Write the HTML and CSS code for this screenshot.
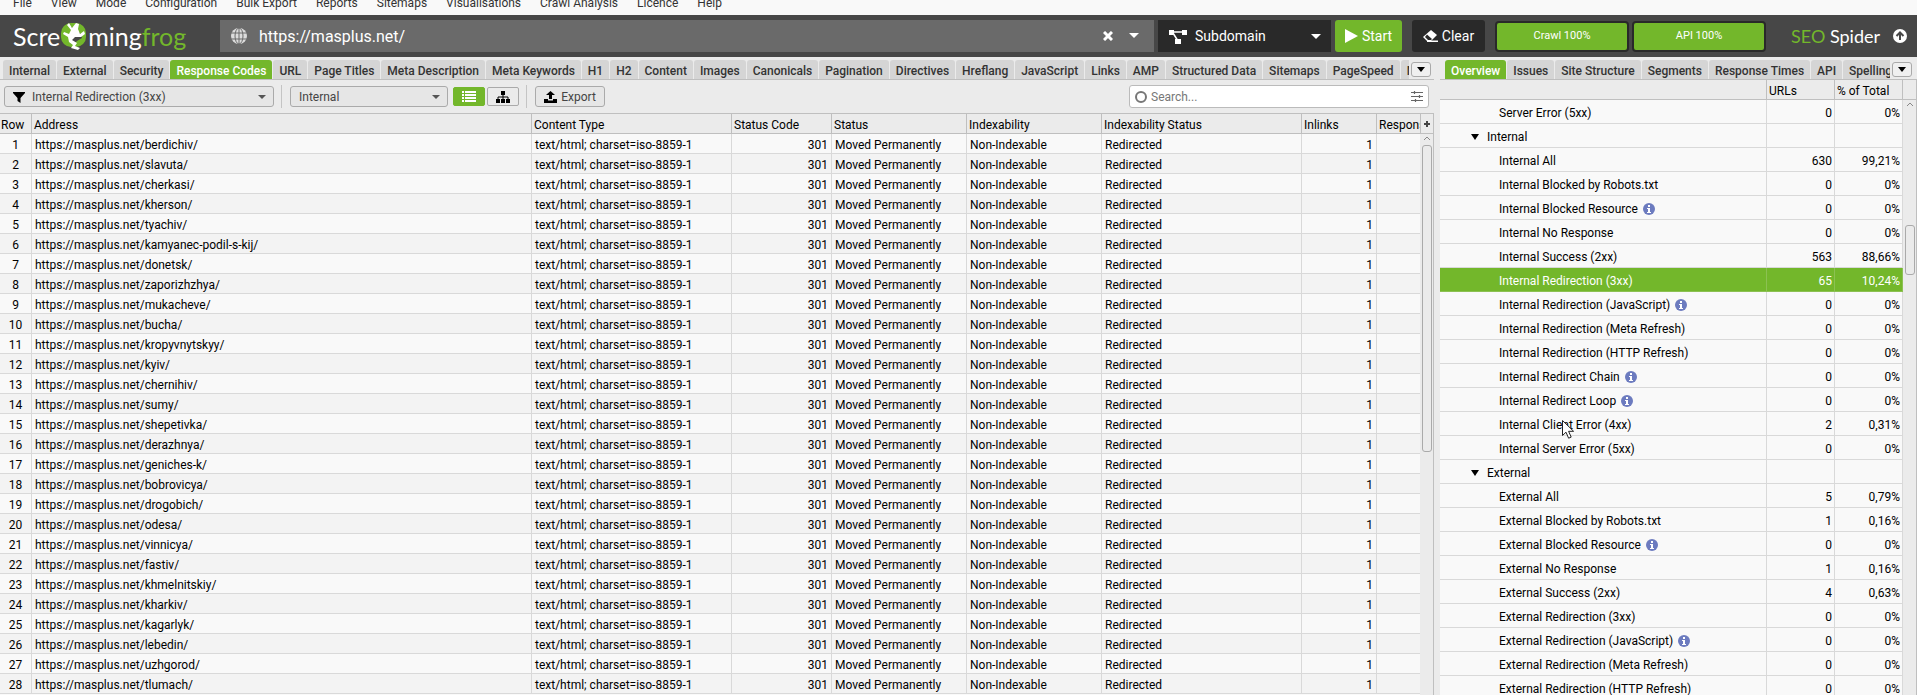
FILE: index.html
```html
<!DOCTYPE html>
<html lang="en">
<head>
<meta charset="utf-8">
<title>SEO Spider</title>
<link rel="stylesheet" href="styles.css">
</head>
<body>
<div class="app">
  <nav class="menu" aria-label="Main menu">
    <button>File</button><button>View</button><button>Mode</button><button>Configuration</button><button>Bulk Export</button><button>Reports</button><button>Sitemaps</button><button>Visualisations</button><button>Crawl Analysis</button><button>Licence</button><button>Help</button>
  </nav>

  <header class="topbar">
    <div class="logo">
      <span>Scre</span>
      <svg class="frog" width="26" height="28" viewBox="0 0 26 28"><rect x="0" y="1" width="25" height="24" rx="10" fill="#73b72b"/><path d="M10 5l5 3 5 4 1 4-5 3-3 3-4-3-1-6 2-3z" fill="#474747"/><path d="M8 1l3 5 4-5 3 1-1 5 2 5 4-3 1 3-4 3-6 0-3 3 5 3-2 3 5 2-2 2-7-2 2-3-4-3-1-5-5-3 1-2 5 2 2-4-4-5z" fill="#fff"/></svg>
      <span>ming<span class="green">frog</span></span>
    </div>
    <div class="url-box">
      <svg width="16" height="16" viewBox="0 0 16 16" fill="none" stroke="#6a6a6a"><circle cx="8" cy="8" r="8" fill="#dcdcdc" stroke="none"/><ellipse cx="8" cy="8" rx="4" ry="8"/><path d="M8 0v16M0 5h16M0 11h16"/></svg>
      <input type="text" aria-label="URL to spider" value="https://masplus.net/">
      <button class="plain" aria-label="Clear URL"><svg width="10" height="10" viewBox="0 0 10 10"><path d="M1 1l8 8M9 1l-8 8" stroke="#fff" stroke-width="3"/></svg></button>
      <button class="plain" aria-label="Recent URLs"><svg width="10" height="6" viewBox="0 0 10 6"><path d="M0 0h10L5 5z" fill="#fff"/></svg></button>
    </div>
    <div class="scope">
      <svg class="scope-icon" width="18" height="14" viewBox="0 0 18 14"><path d="M0 0h5v5H0zM13 0h5v5h-5zM6 9h6v5H6z" fill="#fff"/><path d="M4 2h10M4 3l5 8" stroke="#fff" stroke-width="1.5"/></svg>
      <select aria-label="Crawl scope"><option>Subdomain</option></select>
      <svg class="caret" width="10" height="6" viewBox="0 0 10 6"><path d="M0 0h10L5 5z" fill="#fff"/></svg>
    </div>
    <button class="start"><svg width="13" height="14" viewBox="0 0 13 14"><path d="M0 0l13 7-13 7z" fill="#fff"/></svg>Start</button>
    <button class="clear"><svg width="15" height="12" viewBox="0 0 15 12"><path d="M8 0l6 5-6 6H4L0 7z" fill="#fff"/><path d="M4 4.500l5 4.500-1 1H5L2 7z" fill="#292929"/><path d="M4 10.500h11V12H4z" fill="#fff"/></svg>Clear</button>
    <div class="progress"><div>Crawl 100%</div><div>API 100%</div></div>
    <div class="product"><span class="green">SEO</span> Spider</div>
    <button class="plain up" aria-label="Update available"><svg width="14" height="14" viewBox="0 0 14 14"><circle cx="7" cy="7" r="7" fill="#fff"/><path d="M7 11V4M3.500 7L7 3.500 10.500 7" fill="none" stroke="#474747" stroke-width="2"/></svg></button>
  </header>

  <main class="panes">
    <section class="left">
      <div class="tabbar">
        <div class="tabs">
          <button>Internal</button><button>External</button><button>Security</button><button class="active">Response Codes</button><button>URL</button><button>Page Titles</button><button>Meta Description</button><button>Meta Keywords</button><button>H1</button><button>H2</button><button>Content</button><button>Images</button><button>Canonicals</button><button>Pagination</button><button>Directives</button><button>Hreflang</button><button>JavaScript</button><button>Links</button><button>AMP</button><button>Structured Data</button><button>Sitemaps</button><button>PageSpeed</button><button>Mobile</button>
        </div>
        <button class="more" aria-label="More tabs"><svg width="8" height="5" viewBox="0 0 8 5"><path d="M0 0h8L4 5z"/></svg></button>
      </div>
      <div class="toolbar">
        <div class="combo filter">
          <svg class="funnel" width="12" height="11" viewBox="0 0 12 11"><path d="M0 0h12v1L7.500 6v5L4.500 9V6L0 1z"/></svg>
          <select aria-label="Filter"><option>Internal Redirection (3xx)</option></select>
          <svg class="caret" width="8" height="4" viewBox="0 0 8 4"><path d="M0 0h8L4 4z" fill="#555"/></svg>
        </div>
        <div class="sep"></div>
        <div class="combo kind">
          <select aria-label="Scope"><option>Internal</option></select>
          <svg class="caret" width="8" height="4" viewBox="0 0 8 4"><path d="M0 0h8L4 4z" fill="#555"/></svg>
        </div>
        <div class="views">
          <button class="on" aria-label="List view"><svg width="14" height="11" viewBox="0 0 14 11"><path d="M0 0h2v2H0zM3 0h11v2H3zM0 3h2v2H0zM3 3h11v2H3zM0 6h2v2H0zM3 6h11v2H3zM0 9h2v2H0zM3 9h11v2H3z" fill="#fff"/></svg></button>
          <button aria-label="Tree view"><svg width="14" height="12" viewBox="0 0 14 12"><path d="M5 0h4v4H5zM0 8h4v4H0zM5 8h4v4H5zM10 8h4v4h-4z"/><path d="M7 3v6M2 9V6h10v3" fill="none" stroke="#000"/></svg></button>
        </div>
        <div class="sep"></div>
        <button class="export"><svg width="13" height="12" viewBox="0 0 13 12"><path d="M6.500 0L11 4H8v4H5V4H2zM0 8h4v1.500h5V8h4v4H0z"/></svg>Export</button>
        <div class="search">
          <svg width="12" height="12" viewBox="0 0 12 12"><circle cx="6" cy="6" r="5" fill="none" stroke="#777" stroke-width="2"/></svg>
          <input type="text" aria-label="Search" placeholder="Search...">
          <button class="plain" aria-label="Search options"><svg width="12" height="11" viewBox="0 0 12 11"><path d="M0 1.500h12M0 5.500h12M0 9.500h12M3.500 0v3M8.500 4v3M4.500 8v3" stroke="#666" stroke-width="1.200"/></svg></button>
        </div>
      </div>
      <div class="grid-wrap">
        <div class="grid-scroll">
        <table class="grid">
          <colgroup><col class="c-row"><col class="c-addr"><col class="c-type"><col class="c-code"><col class="c-status"><col class="c-index"><col class="c-istatus"><col class="c-in"><col></colgroup>
          <thead><tr><th>Row</th><th>Address</th><th>Content Type</th><th>Status Code</th><th>Status</th><th>Indexability</th><th>Indexability Status</th><th>Inlinks</th><th>Response Time</th></tr></thead>
          <tbody>
            <tr><td>1</td><td>https://masplus.net/berdichiv/</td><td>text/html; charset=iso-8859-1</td><td>301</td><td>Moved Permanently</td><td>Non-Indexable</td><td>Redirected</td><td>1</td><td></td></tr>
            <tr><td>2</td><td>https://masplus.net/slavuta/</td><td>text/html; charset=iso-8859-1</td><td>301</td><td>Moved Permanently</td><td>Non-Indexable</td><td>Redirected</td><td>1</td><td></td></tr>
            <tr><td>3</td><td>https://masplus.net/cherkasi/</td><td>text/html; charset=iso-8859-1</td><td>301</td><td>Moved Permanently</td><td>Non-Indexable</td><td>Redirected</td><td>1</td><td></td></tr>
            <tr><td>4</td><td>https://masplus.net/kherson/</td><td>text/html; charset=iso-8859-1</td><td>301</td><td>Moved Permanently</td><td>Non-Indexable</td><td>Redirected</td><td>1</td><td></td></tr>
            <tr><td>5</td><td>https://masplus.net/tyachiv/</td><td>text/html; charset=iso-8859-1</td><td>301</td><td>Moved Permanently</td><td>Non-Indexable</td><td>Redirected</td><td>1</td><td></td></tr>
            <tr><td>6</td><td>https://masplus.net/kamyanec-podil-s-kij/</td><td>text/html; charset=iso-8859-1</td><td>301</td><td>Moved Permanently</td><td>Non-Indexable</td><td>Redirected</td><td>1</td><td></td></tr>
            <tr><td>7</td><td>https://masplus.net/donetsk/</td><td>text/html; charset=iso-8859-1</td><td>301</td><td>Moved Permanently</td><td>Non-Indexable</td><td>Redirected</td><td>1</td><td></td></tr>
            <tr><td>8</td><td>https://masplus.net/zaporizhzhya/</td><td>text/html; charset=iso-8859-1</td><td>301</td><td>Moved Permanently</td><td>Non-Indexable</td><td>Redirected</td><td>1</td><td></td></tr>
            <tr><td>9</td><td>https://masplus.net/mukacheve/</td><td>text/html; charset=iso-8859-1</td><td>301</td><td>Moved Permanently</td><td>Non-Indexable</td><td>Redirected</td><td>1</td><td></td></tr>
            <tr><td>10</td><td>https://masplus.net/bucha/</td><td>text/html; charset=iso-8859-1</td><td>301</td><td>Moved Permanently</td><td>Non-Indexable</td><td>Redirected</td><td>1</td><td></td></tr>
            <tr><td>11</td><td>https://masplus.net/kropyvnytskyy/</td><td>text/html; charset=iso-8859-1</td><td>301</td><td>Moved Permanently</td><td>Non-Indexable</td><td>Redirected</td><td>1</td><td></td></tr>
            <tr><td>12</td><td>https://masplus.net/kyiv/</td><td>text/html; charset=iso-8859-1</td><td>301</td><td>Moved Permanently</td><td>Non-Indexable</td><td>Redirected</td><td>1</td><td></td></tr>
            <tr><td>13</td><td>https://masplus.net/chernihiv/</td><td>text/html; charset=iso-8859-1</td><td>301</td><td>Moved Permanently</td><td>Non-Indexable</td><td>Redirected</td><td>1</td><td></td></tr>
            <tr><td>14</td><td>https://masplus.net/sumy/</td><td>text/html; charset=iso-8859-1</td><td>301</td><td>Moved Permanently</td><td>Non-Indexable</td><td>Redirected</td><td>1</td><td></td></tr>
            <tr><td>15</td><td>https://masplus.net/shepetivka/</td><td>text/html; charset=iso-8859-1</td><td>301</td><td>Moved Permanently</td><td>Non-Indexable</td><td>Redirected</td><td>1</td><td></td></tr>
            <tr><td>16</td><td>https://masplus.net/derazhnya/</td><td>text/html; charset=iso-8859-1</td><td>301</td><td>Moved Permanently</td><td>Non-Indexable</td><td>Redirected</td><td>1</td><td></td></tr>
            <tr><td>17</td><td>https://masplus.net/geniches-k/</td><td>text/html; charset=iso-8859-1</td><td>301</td><td>Moved Permanently</td><td>Non-Indexable</td><td>Redirected</td><td>1</td><td></td></tr>
            <tr><td>18</td><td>https://masplus.net/bobrovicya/</td><td>text/html; charset=iso-8859-1</td><td>301</td><td>Moved Permanently</td><td>Non-Indexable</td><td>Redirected</td><td>1</td><td></td></tr>
            <tr><td>19</td><td>https://masplus.net/drogobich/</td><td>text/html; charset=iso-8859-1</td><td>301</td><td>Moved Permanently</td><td>Non-Indexable</td><td>Redirected</td><td>1</td><td></td></tr>
            <tr><td>20</td><td>https://masplus.net/odesa/</td><td>text/html; charset=iso-8859-1</td><td>301</td><td>Moved Permanently</td><td>Non-Indexable</td><td>Redirected</td><td>1</td><td></td></tr>
            <tr><td>21</td><td>https://masplus.net/vinnicya/</td><td>text/html; charset=iso-8859-1</td><td>301</td><td>Moved Permanently</td><td>Non-Indexable</td><td>Redirected</td><td>1</td><td></td></tr>
            <tr><td>22</td><td>https://masplus.net/fastiv/</td><td>text/html; charset=iso-8859-1</td><td>301</td><td>Moved Permanently</td><td>Non-Indexable</td><td>Redirected</td><td>1</td><td></td></tr>
            <tr><td>23</td><td>https://masplus.net/khmelnitskiy/</td><td>text/html; charset=iso-8859-1</td><td>301</td><td>Moved Permanently</td><td>Non-Indexable</td><td>Redirected</td><td>1</td><td></td></tr>
            <tr><td>24</td><td>https://masplus.net/kharkiv/</td><td>text/html; charset=iso-8859-1</td><td>301</td><td>Moved Permanently</td><td>Non-Indexable</td><td>Redirected</td><td>1</td><td></td></tr>
            <tr><td>25</td><td>https://masplus.net/kagarlyk/</td><td>text/html; charset=iso-8859-1</td><td>301</td><td>Moved Permanently</td><td>Non-Indexable</td><td>Redirected</td><td>1</td><td></td></tr>
            <tr><td>26</td><td>https://masplus.net/lebedin/</td><td>text/html; charset=iso-8859-1</td><td>301</td><td>Moved Permanently</td><td>Non-Indexable</td><td>Redirected</td><td>1</td><td></td></tr>
            <tr><td>27</td><td>https://masplus.net/uzhgorod/</td><td>text/html; charset=iso-8859-1</td><td>301</td><td>Moved Permanently</td><td>Non-Indexable</td><td>Redirected</td><td>1</td><td></td></tr>
            <tr><td>28</td><td>https://masplus.net/tlumach/</td><td>text/html; charset=iso-8859-1</td><td>301</td><td>Moved Permanently</td><td>Non-Indexable</td><td>Redirected</td><td>1</td><td></td></tr>
          </tbody>
        </table>
        </div>
        <div class="side">
          <button class="add" aria-label="Add column"><svg width="6" height="6" viewBox="0 0 6 6"><path d="M3 0v6M0 3h6" stroke="#444" stroke-width="2"/></svg></button>
          <div class="scrollbar main-bar"><svg width="8" height="5" viewBox="0 0 8 5"><path d="M1 4l3-3 3 3" fill="none" stroke="#888"/></svg><i class="thumb"></i></div>
        </div>
      </div>
    </section>

    <aside class="right">
      <div class="tabbar">
        <div class="tabs">
          <button class="active">Overview</button><button>Issues</button><button>Site Structure</button><button>Segments</button><button>Response Times</button><button>API</button><button>Spelling &amp; Grammar</button>
        </div>
        <button class="more" aria-label="More tabs"><svg width="8" height="5" viewBox="0 0 8 5"><path d="M0 0h8L4 5z"/></svg></button>
      </div>
      <div class="grid-wrap">
        <div class="grid-scroll">
        <table class="tree">
          <colgroup><col><col class="c-num"><col class="c-num"></colgroup>
          <thead><tr><th></th><th>URLs</th><th>% of Total</th></tr></thead>
          <tbody>
            <tr><td>Server Error (5xx)</td><td>0</td><td>0%</td></tr>
            <tr class="group"><td><svg width="8" height="6" viewBox="0 0 8 6"><path d="M0 0h8L4 6z"/></svg>Internal</td><td></td><td></td></tr>
            <tr><td>Internal All</td><td>630</td><td>99,21%</td></tr>
            <tr><td>Internal Blocked by Robots.txt</td><td>0</td><td>0%</td></tr>
            <tr><td>Internal Blocked Resource<svg class="info" width="12" height="12" viewBox="0 0 12 12"><circle cx="6" cy="6" r="6"/><path d="M5 2h2v2H5zM4 5h3v4h1v1H4V9h1V6H4z"/></svg></td><td>0</td><td>0%</td></tr>
            <tr><td>Internal No Response</td><td>0</td><td>0%</td></tr>
            <tr><td>Internal Success (2xx)</td><td>563</td><td>88,66%</td></tr>
            <tr class="selected"><td>Internal Redirection (3xx)</td><td>65</td><td>10,24%</td></tr>
            <tr><td>Internal Redirection (JavaScript)<svg class="info" width="12" height="12" viewBox="0 0 12 12"><circle cx="6" cy="6" r="6"/><path d="M5 2h2v2H5zM4 5h3v4h1v1H4V9h1V6H4z"/></svg></td><td>0</td><td>0%</td></tr>
            <tr><td>Internal Redirection (Meta Refresh)</td><td>0</td><td>0%</td></tr>
            <tr><td>Internal Redirection (HTTP Refresh)</td><td>0</td><td>0%</td></tr>
            <tr><td>Internal Redirect Chain<svg class="info" width="12" height="12" viewBox="0 0 12 12"><circle cx="6" cy="6" r="6"/><path d="M5 2h2v2H5zM4 5h3v4h1v1H4V9h1V6H4z"/></svg></td><td>0</td><td>0%</td></tr>
            <tr><td>Internal Redirect Loop<svg class="info" width="12" height="12" viewBox="0 0 12 12"><circle cx="6" cy="6" r="6"/><path d="M5 2h2v2H5zM4 5h3v4h1v1H4V9h1V6H4z"/></svg></td><td>0</td><td>0%</td></tr>
            <tr><td>Internal Client Error (4xx)</td><td>2</td><td>0,31%</td></tr>
            <tr><td>Internal Server Error (5xx)</td><td>0</td><td>0%</td></tr>
            <tr class="group"><td><svg width="8" height="6" viewBox="0 0 8 6"><path d="M0 0h8L4 6z"/></svg>External</td><td></td><td></td></tr>
            <tr><td>External All</td><td>5</td><td>0,79%</td></tr>
            <tr><td>External Blocked by Robots.txt</td><td>1</td><td>0,16%</td></tr>
            <tr><td>External Blocked Resource<svg class="info" width="12" height="12" viewBox="0 0 12 12"><circle cx="6" cy="6" r="6"/><path d="M5 2h2v2H5zM4 5h3v4h1v1H4V9h1V6H4z"/></svg></td><td>0</td><td>0%</td></tr>
            <tr><td>External No Response</td><td>1</td><td>0,16%</td></tr>
            <tr><td>External Success (2xx)</td><td>4</td><td>0,63%</td></tr>
            <tr><td>External Redirection (3xx)</td><td>0</td><td>0%</td></tr>
            <tr><td>External Redirection (JavaScript)<svg class="info" width="12" height="12" viewBox="0 0 12 12"><circle cx="6" cy="6" r="6"/><path d="M5 2h2v2H5zM4 5h3v4h1v1H4V9h1V6H4z"/></svg></td><td>0</td><td>0%</td></tr>
            <tr><td>External Redirection (Meta Refresh)</td><td>0</td><td>0%</td></tr>
            <tr><td>External Redirection (HTTP Refresh)</td><td>0</td><td>0%</td></tr>
          </tbody>
        </table>
        </div>
        <div class="side">
          <div class="corner"></div>
          <div class="scrollbar tree-bar"><svg width="8" height="5" viewBox="0 0 8 5"><path d="M1 4l3-3 3 3" fill="none" stroke="#888"/></svg><i class="thumb"></i></div>
        </div>
      </div>
      <svg class="cursor" width="13" height="20" viewBox="0 0 13 20"><path d="M.5 .5v15l3.500-3.300 2.600 6 2.600-1.100-2.600-5.800h5z" fill="#fff" stroke="#222"/></svg>
    </aside>
  </main>
</div>
</body>
</html>
```
FILE: styles.css
```css
* { box-sizing: border-box; }

body {
  margin: 0;
  font: 12px/16px Roboto, "Liberation Sans", sans-serif;
  color: #000;
  background: #ebebeb;
}

button, input, select {
  font: inherit;
  color: inherit;
  margin: 0;
  padding: 0;
  border: 0;
  background: none;
  appearance: none;
  outline: none;
  white-space: nowrap;
}

svg { display: block; flex: none; }
.green { color: #73b72b; }
.plain { display: flex; }

.app {
  height: 100vh;
  display: flex;
  flex-direction: column;
  overflow: hidden;
}

/* Menu */
.menu {
  display: flex;
  align-items: flex-end;
  gap: 19px;
  height: 15px;
  padding: 0 13px 4px;
  background: #f9f9f9;
  color: #333;
  overflow: hidden;
}

/* Top bar */
.topbar {
  display: flex;
  align-items: center;
  height: 42px;
  padding: 5px 10px 5px 13px;
  background: #474747;
  color: #fff;
  font-size: 14px;
}
.topbar > * { height: 32px; flex: none; }
.logo {
  display: flex;
  align-items: center;
  width: 207px;
  font: 25px/32px Lato, sans-serif;
}
.frog { margin: 0 1px; }
.topbar .url-box {
  flex: 1;
  min-width: 0;
  display: flex;
  align-items: center;
  gap: 16px;
  padding: 0 15px 0 11px;
  margin-right: 4px;
  background: #6a6a6a;
}
.url-box input { flex: 1; min-width: 0; margin-left: -4px; font-size: 16px; }
.scope {
  position: relative;
  width: 173px;
  margin-right: 4px;
  background: #292929;
}
.scope select { width: 100%; height: 100%; padding-left: 37px; }
.scope-icon { position: absolute; left: 11px; top: 10px; pointer-events: none; }
.caret { position: absolute; right: 10px; top: 14px; pointer-events: none; }
.start, .clear {
  display: flex;
  align-items: center;
  justify-content: center;
  gap: 4px;
  border-radius: 3px;
}
.start { width: 67px; background: #73b72b; margin-right: 10px; }
.clear { width: 73px; background: #292929; margin-right: 10px; }
.progress {
  display: flex;
  align-items: center;
  gap: 3px;
  font-size: 11px;
}
.progress div {
  display: flex;
  align-items: center;
  justify-content: center;
  width: 134px;
  height: 31px;
  border: 2px solid #292929;
  border-radius: 4px;
  background: #73b72b;
}
.product { margin-left: 25px; width: 102px; font: 18px/32px Lato, sans-serif; }
.up { align-items: center; }

/* Panes */
.panes { flex: 1; min-height: 0; display: flex; gap: 6px; }
.left { flex: 1; min-width: 0; display: flex; flex-direction: column; }
.right { position: relative; flex: none; width: 477px; display: flex; flex-direction: column; }

.tabbar {
  flex: none;
  display: flex;
  align-items: flex-end;
  gap: 2px;
  height: 23px;
  padding: 0 3px;
  border-bottom: 1px solid #bfbfbf;
  background: #ebebeb;
}
.right .tabbar { padding-left: 5px; padding-right: 5px; }
.tabs { flex: 1; min-width: 0; display: flex; gap: 1px; overflow: hidden; }
.tabs button {
  flex: none;
  height: 19px;
  padding: 2px 6px 0;
  border-radius: 3px 3px 0 0;
  background: #d5d5d5;
  color: #333;
  font-weight: 500;
  line-height: 16px;
}
.tabs .active { background: #73b72b; color: #fff; }
.more {
  display: flex;
  align-items: center;
  justify-content: center;
  width: 20px;
  height: 15px;
  margin-bottom: 2px;
  border: 1px solid #aaa;
  border-radius: 3px;
  background: #f0f0f0;
}

/* Toolbar */
.toolbar {
  flex: none;
  display: flex;
  align-items: center;
  height: 33px;
  padding: 0 5px 0 4px;
  color: #444;
}
.combo { position: relative; height: 21px; }
.combo select {
  width: 100%;
  height: 100%;
  padding-left: 8px;
  border: 1px solid #aaa;
  border-radius: 3px;
  background: #e6e6e6;
}
.combo .caret { right: 8px; top: 9px; }
.filter { width: 270px; }
.filter select { padding-left: 27px; }
.kind { width: 158px; }
.funnel { position: absolute; left: 9px; top: 6px; pointer-events: none; }
.sep { width: 1px; height: 23px; margin: 0 8px 0 7px; background: #c4c4c4; }
.views { display: flex; gap: 2px; margin-left: 5px; }
.views button {
  display: flex;
  align-items: center;
  justify-content: center;
  width: 32px;
  height: 19px;
  border: 1px solid #aaa;
  border-radius: 2px;
}
.views .on { background: #73b72b; border-color: #73b72b; }
.export {
  display: flex;
  align-items: center;
  justify-content: center;
  gap: 4px;
  width: 70px;
  height: 21px;
  border: 1px solid #aaa;
  border-radius: 3px;
  background: #e6e6e6;
}
.search {
  display: flex;
  align-items: center;
  gap: 4px;
  width: 300px;
  height: 23px;
  margin-left: auto;
  padding: 0 5px;
  border: 1px solid #bbb;
  border-radius: 3px;
  background: #fff;
}
.search input { flex: 1; min-width: 0; }
.search input::placeholder { color: #777; }

/* Tables */
.grid-wrap { flex: 1; min-height: 0; display: flex; background: #f9f9f9; }
.left .grid-wrap { border-top: 1px solid #bfbfbf; }
.grid-scroll { flex: 1; min-width: 0; overflow: hidden; }
table { width: 100%; table-layout: fixed; border-collapse: separate; border-spacing: 0; }
th, td { padding: 0; text-align: left; font-weight: 400; white-space: nowrap; overflow: hidden; }
th {
  height: 20px;
  padding-left: 2px;
  padding-top: 3px;
  border-right: 1px solid #bfbfbf;
  border-bottom: 1px solid #bfbfbf;
  background: #ebebeb;
}
td {
  height: 20px;
  padding: 3px 3px 0 3px;
  border-right: 1px solid #d9d9d9;
  border-bottom: 1px solid #d9d9d9;
}
.grid tr:nth-child(even) td { background: #f3f3f3; }
.grid th:last-child, .grid td:last-child { border-right: 0; }
.grid th:first-child { padding-left: 1px; }
.grid td:first-child { text-align: center; }
.grid td:nth-child(4), .grid td:nth-child(8) { text-align: right; }
.c-row { width: 32px; }
.c-addr { width: 500px; }
.c-type, .c-istatus { width: 200px; }
.c-code { width: 100px; }
.c-status, .c-index { width: 135px; }
.c-in { width: 75px; }

.tree td { height: 24px; padding: 3px 2px 0 59px; }
.tree td:not(:first-child) { padding-left: 3px; text-align: right; }
.tree .group td:first-child { padding-left: 47px; }
.tree td svg { display: inline-block; vertical-align: middle; }
.tree .group svg { margin: 0 8px 2px -16px; }
.tree .info { margin: 0 0 1px 5px; fill: #6c7bbf; }
.tree .info path { fill: #fff; }
.tree .selected td { background: #73b72b; border-color: #8cc152; color: #fff; }
.c-num { width: 68px; }

.side {
  flex: none;
  display: flex;
  flex-direction: column;
  width: 14px;
  border-right: 1px solid #bfbfbf;
  background: #ebebeb;
}
.add, .corner { flex: none; height: 20px; border-bottom: 1px solid #bfbfbf; }
.add { display: flex; align-items: center; justify-content: center; border-left: 1px solid #bfbfbf; }
.scrollbar { flex: 1; display: flex; flex-direction: column; align-items: center; padding-top: 2px; }
.thumb { width: 10px; border: 1px solid #aaa; border-radius: 3px; background: #ebebeb; }
.main-bar .thumb { margin-top: 4px; height: 55%; }
.tree-bar .thumb { margin-top: 118px; height: 50px; }

.cursor { position: absolute; left: 122px; top: 363px; pointer-events: none; }
```
